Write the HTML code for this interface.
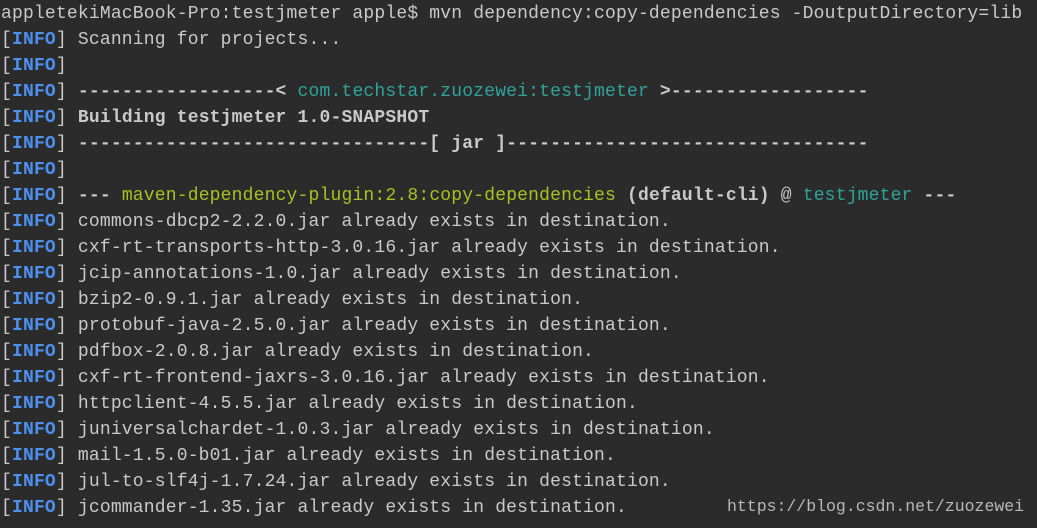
<!DOCTYPE html>
<html><head><meta charset="utf-8"><style>
html,body{margin:0;padding:0;background:#2b2b2b;width:1037px;height:528px;overflow:hidden}
pre{margin:0;position:absolute;left:1px;top:1px;font-family:"Liberation Mono",monospace;font-size:18px;letter-spacing:0.18px;line-height:26px;color:#c9c9c9}
b{font-weight:bold}
.i{color:#4e90ef;font-weight:bold}
.t{color:#2fa39b}
.g{color:#a8c023}
.wm{position:absolute;left:727px;top:497px;font-family:"Liberation Mono",monospace;font-size:16.5px;color:#b8b8b8}
</style></head><body>
<pre>appletekiMacBook-Pro:testjmeter apple$ mvn dependency:copy-dependencies -DoutputDirectory=lib
[<span class="i">INFO</span>] Scanning for projects...
[<span class="i">INFO</span>]
[<span class="i">INFO</span>] <b>------------------&lt; </b><span class="t">com.techstar.zuozewei:testjmeter</span><b> &gt;------------------</b>
[<span class="i">INFO</span>] <b>Building testjmeter 1.0-SNAPSHOT</b>
[<span class="i">INFO</span>] <b>--------------------------------[ jar ]---------------------------------</b>
[<span class="i">INFO</span>]
[<span class="i">INFO</span>] <b>---</b> <span class="g">maven-dependency-plugin:2.8:copy-dependencies</span> <b>(default-cli)</b> @ <span class="t">testjmeter</span> <b>---</b>
[<span class="i">INFO</span>] commons-dbcp2-2.2.0.jar already exists in destination.
[<span class="i">INFO</span>] cxf-rt-transports-http-3.0.16.jar already exists in destination.
[<span class="i">INFO</span>] jcip-annotations-1.0.jar already exists in destination.
[<span class="i">INFO</span>] bzip2-0.9.1.jar already exists in destination.
[<span class="i">INFO</span>] protobuf-java-2.5.0.jar already exists in destination.
[<span class="i">INFO</span>] pdfbox-2.0.8.jar already exists in destination.
[<span class="i">INFO</span>] cxf-rt-frontend-jaxrs-3.0.16.jar already exists in destination.
[<span class="i">INFO</span>] httpclient-4.5.5.jar already exists in destination.
[<span class="i">INFO</span>] juniversalchardet-1.0.3.jar already exists in destination.
[<span class="i">INFO</span>] mail-1.5.0-b01.jar already exists in destination.
[<span class="i">INFO</span>] jul-to-slf4j-1.7.24.jar already exists in destination.
[<span class="i">INFO</span>] jcommander-1.35.jar already exists in destination.</pre>
<div class="wm">https://blog.csdn.net/zuozewei</div>
</body></html>
